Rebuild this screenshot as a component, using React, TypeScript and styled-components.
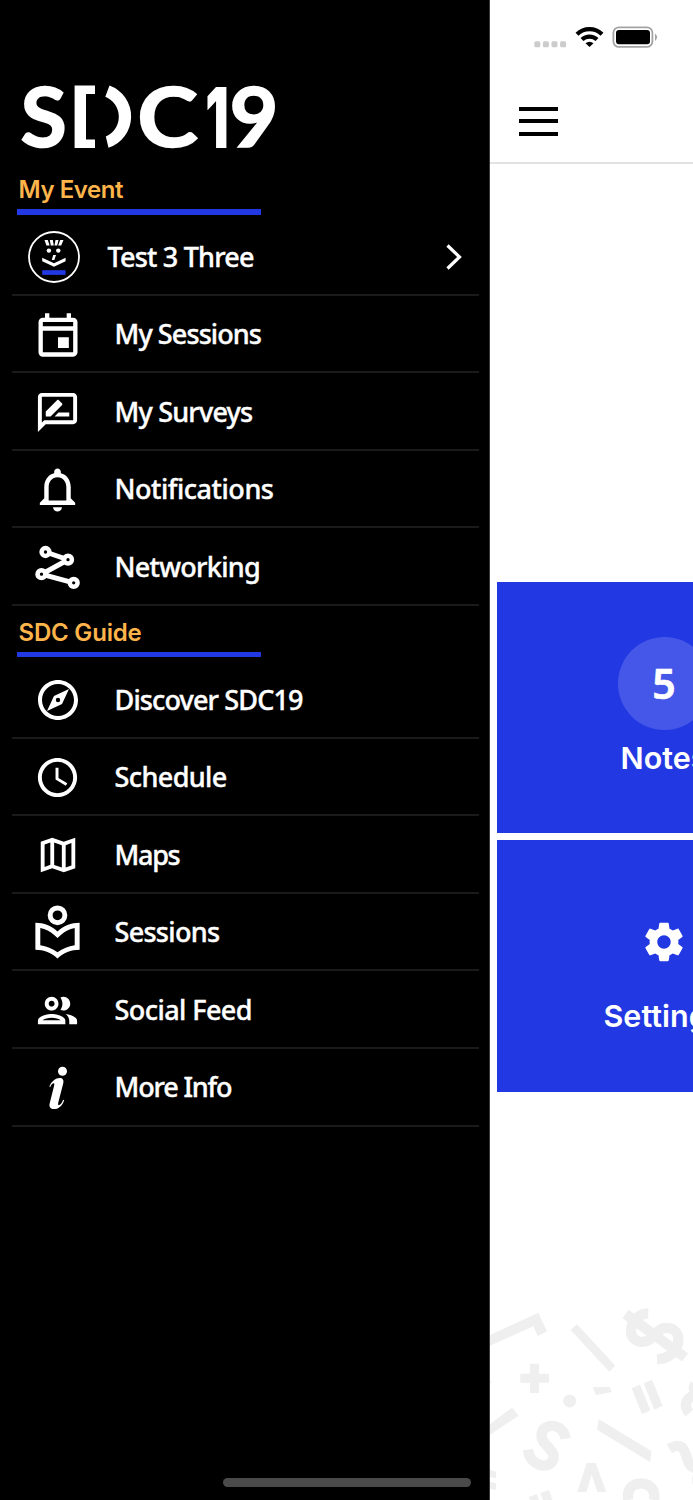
import React from "react";
import styled, { createGlobalStyle } from "styled-components";

const GlobalStyle = createGlobalStyle`
  *, *::before, *::after { box-sizing: border-box; }
  html, body { margin: 0; padding: 0; background: #fff; }
  body { overflow: hidden; }
`;

const BLUE = "#2238e2";
const AMBER = "#fdb44b";
const BODY_FONT = `"Noto Sans", "Open Sans", sans-serif`;
const SHARP_FONT = `Inter, Lato, sans-serif`;

const Screen = styled.div`
  display: flex;
  width: 693px;
  height: 1500px;
  overflow: hidden;
  background: #fff;
`;

const Drawer = styled.nav`
  display: flex;
  flex-direction: column;
  flex: 0 0 490px;
  height: 1500px;
  background: #000;
  border-right: 1px solid #3a3a3a;
`;

const LogoSvg = styled.svg`
  display: block;
  flex: none;
  width: 290px;
  height: 124px;
  margin: 50px 0 0 5px;
`;

const SectionTitle = styled.h2<{ $top: number; $tracking: number }>`
  margin: ${(p) => p.$top}px 0 0 18.5px;
  height: 32px;
  font: 600 24px/32px ${SHARP_FONT};
  letter-spacing: ${(p) => p.$tracking}px;
  color: ${AMBER};
  white-space: nowrap;
`;

const SectionRule = styled.div`
  width: 244px;
  height: 5.5px;
  margin: 3px 0 3.5px 17px;
  flex: none;
  background: ${BLUE};
`;

const MenuList = styled.ul`
  list-style: none;
  margin: 0 10px 0 12px;
  padding: 0;
`;

const MenuRow = styled.li`
  display: flex;
  align-items: center;
  height: 77.6px;
  padding-top: 2.5px;
  border-bottom: 2px solid #1a1a1a;
`;

const IconSlot = styled.span<{ $lead?: boolean }>`
  display: flex;
  align-items: center;
  justify-content: center;
  flex: none;
  width: ${(p) => (p.$lead ? 84 : 91)}px;
  margin-right: 11.5px;
`;

const MenuLabel = styled.span<{ $tracking: number }>`
  flex: 1;
  padding-bottom: 1px;
  font: 500 27px/38px ${BODY_FONT};
  letter-spacing: ${(p) => p.$tracking}px;
  -webkit-text-stroke: 0.4px #fff;
  color: #fff;
  white-space: nowrap;
`;

const ChevronSvg = styled.svg`
  width: 20px;
  height: 28px;
  margin-right: 15px;
`;

const HomeIndicator = styled.div`
  width: 248px;
  height: 8.5px;
  margin: auto 0 13.5px 222.5px;
  border-radius: 5px;
  background: #4a4a4a;
`;

const Page = styled.main`
  display: flex;
  flex-direction: column;
  flex: 1;
  min-width: 0;
  height: 1500px;
  overflow: hidden;
`;

const StatusBar = styled.div`
  display: flex;
  align-items: flex-start;
  height: 76px;
  padding: 25px 0 0 44px;
`;

const StatusSvg = styled.svg`
  display: block;
  width: 126px;
  height: 24px;
`;

const TopBar = styled.header`
  height: 88px;
  padding: 30.6px 0 0 29px;
  border-bottom: 2px solid #e2e2e2;
`;

const MenuButton = styled.button`
  display: flex;
  flex-direction: column;
  gap: 8.8px;
  width: 39px;
  padding: 0;
  border: 0;
  background: none;
`;

const MenuBar = styled.span`
  display: block;
  height: 4px;
  background: #000;
`;

const Tiles = styled.section`
  display: flex;
  flex-direction: column;
  gap: 7px;
  margin: 418px 0 0 7px;
  width: 334px;
`;

const Tile = styled.article<{ $pad: number }>`
  display: flex;
  flex-direction: column;
  align-items: center;
  height: 251.4px;
  padding-top: ${(p) => p.$pad}px;
  background: ${BLUE};
  color: #fff;
`;

const CountBadge = styled.div`
  display: flex;
  align-items: center;
  justify-content: center;
  width: 93px;
  height: 93px;
  padding-bottom: 2px;
  border-radius: 50%;
  background: #4557e8;
  font: 600 41px/40px ${BODY_FONT};
  -webkit-text-stroke: 0.6px #fff;
`;

const TileLabel = styled.div<{ $top: number }>`
  margin-top: ${(p) => p.$top}px;
  font: 600 30.5px/40px ${SHARP_FONT};
`;

const PatternSvg = styled.svg`
  display: block;
  width: 203px;
  height: 205px;
  margin-top: auto;
`;

const Glyph = ({ size, d }: { size: number; d: string }) => (
  <svg width={size} height={size} viewBox="0 0 24 24" fill="#fff" fillRule="evenodd">
    <path d={d} />
  </svg>
);

const ICONS = {
  event:
    "M19 4h-1V2h-2v2H8V2H6v2H5c-1.11 0-1.99.9-1.99 2L3 20a2 2 0 002 2h14c1.1 0 2-.9 2-2V6c0-1.1-.9-2-2-2zm0 16H5V10h14v10zm0-12H5V6h14v2zm-7 5h5v5h-5z",
  review:
    "M20 2H4c-1.1 0-1.99.9-1.99 2L2 22l4-4h14c1.1 0 2-.9 2-2V4c0-1.1-.9-2-2-2zm0 14H5.17l-.59.59-.58.58V4h16v12zm-9.5-2H18v-2h-5.5zm3.86-5.87c.2-.2.2-.51 0-.71l-1.77-1.77c-.2-.2-.51-.2-.71 0L6 11.53V14h2.47l5.89-5.87z",
  bell:
    "M12 22c1.1 0 2-.9 2-2h-4c0 1.1.9 2 2 2zm6-6v-5c0-3.07-1.63-5.64-4.5-6.32V4c0-.83-.67-1.5-1.5-1.5s-1.5.67-1.5 1.5v.68C7.64 5.36 6 7.92 6 11v5l-2 2v1h16v-1l-2-2zm-2 1H8v-6c0-2.48 1.51-4.5 4-4.5s4 2.02 4 4.5v6z",
  compass:
    "M12 2C6.48 2 2 6.48 2 12s4.48 10 10 10 10-4.48 10-10S17.52 2 12 2zm0 18c-4.41 0-8-3.59-8-8s3.59-8 8-8 8 3.59 8 8-3.59 8-8 8zM17.5 6.5L9.99 9.99 6.5 17.5l7.51-3.49L17.5 6.5zM12 10.9a1.1 1.1 0 110 2.2 1.1 1.1 0 010-2.2z",
  clock:
    "M12 2C6.48 2 2 6.48 2 12s4.48 10 10 10 10-4.48 10-10S17.52 2 12 2zm0 18c-4.41 0-8-3.59-8-8s3.59-8 8-8 8 3.59 8 8-3.59 8-8 8zM12.5 7H11v6l5.25 3.15.75-1.23-4.5-2.67z",
  map: "M3 5.1L9 3l6 2.1L21 3v15.9L15 21l-6-2.1L3 21zM5 6.5v11.7l3-1.05V5.47zM10 5.47v11.7l4 1.4V6.87zM16 6.86v11.7l3-1.05V5.8z",
  library:
    "M12 1a4 4 0 110 8 4 4 0 010-8zM12 3a2 2 0 100 4 2 2 0 000-4zM12 11.55C9.64 9.35 6.48 8 3 8v11c3.48 0 6.64 1.35 9 3.55 2.36-2.19 5.52-3.55 9-3.55V8c-3.48 0-6.64 1.35-9 3.55zm7 5.63c-2.53.34-4.93 1.3-7 2.82-2.06-1.52-4.47-2.49-7-2.83v-6.95c2.1.38 4.05 1.35 5.64 2.83L12 14.28l1.36-1.27A11.18 11.18 0 0119 10.18z",
  people:
    "M9 13.75c-2.34 0-7 1.17-7 3.5V19h14v-1.75c0-2.33-4.66-3.5-7-3.5zM4.34 17c.84-.58 2.87-1.25 4.66-1.25s3.82.67 4.66 1.25H4.34zM9 12c1.93 0 3.5-1.57 3.5-3.5S10.93 5 9 5 5.500 6.57 5.500 8.500 7.070 12 9 12zm0-5c.83 0 1.500.67 1.500 1.500S9.830 10 9 10s-1.500-.67-1.500-1.500S8.170 7 9 7zm7.040 6.810c1.160.84 1.960 1.960 1.960 3.440V19h4v-1.750c0-2.020-3.500-3.170-5.960-3.440zM15 12c1.930 0 3.500-1.570 3.500-3.500S16.930 5 15 5c-.54 0-1.040.13-1.500.35.63.89 1 1.980 1 3.150s-.37 2.260-1 3.150c.46.22.96.35 1.500.35z",
  gear:
    "M19.43 12.98c.04-.32.07-.64.07-.98s-.03-.66-.07-.98l2.11-1.65c.19-.15.24-.42.12-.64l-2-3.46c-.12-.22-.39-.3-.61-.22l-2.49 1c-.52-.4-1.08-.73-1.69-.98l-.38-2.65C14.46 2.18 14.25 2 14 2h-4c-.25 0-.46.18-.49.42l-.38 2.65c-.61.25-1.17.59-1.69.98l-2.49-1c-.23-.09-.49 0-.61.22l-2 3.46c-.13.22-.07.49.12.64l2.11 1.65c-.04.32-.07.65-.07.98s.03.66.07.98l-2.11 1.65c-.19.15-.24.42-.12.64l2 3.46c.12.22.39.3.61.22l2.49-1c.52.4 1.08.73 1.69.98l.38 2.65c.03.24.24.42.49.42h4c.25 0 .46-.18.49-.42l.38-2.65c.61-.25 1.17-.59 1.69-.98l2.49 1c.23.09.49 0 .61-.22l2-3.46c.12-.22.07-.49-.12-.64l-2.11-1.65zM12 15.5c-1.93 0-3.5-1.57-3.5-3.5s1.57-3.5 3.5-3.5 3.5 1.57 3.5 3.5-1.57 3.5-3.5 3.5z",
};

const Avatar = () => (
  <svg width="52" height="52" viewBox="0 0 52 52" fill="#fff">
    <circle cx="26" cy="26" r="25" fill="none" stroke="#fff" strokeWidth="1.8" />
    <path d="M16.500 9h3.300l1.800 5.600h-3.200zM21.800 9h3l1 5.600h-3zM27.500 9h3l-1.300 5.600h-2.700zM32.200 9h3.300l-2.300 5.600h-3z" />
    <circle cx="20.900" cy="19.600" r="2.200" />
    <circle cx="30.300" cy="19.600" r="2.200" />
    <path d="M25.200 24h2.800l-1.700 5h-2.500z" />
    <path d="M14.200 26.800L26 32.300 37.600 26.800v3.500L26 35.800l-11.800-5.500z" />
    <rect x="14.200" y="39.200" width="23.400" height="4.700" fill={BLUE} />
  </svg>
);

const NetworkIcon = () => (
  <svg width="46" height="46" viewBox="35 544.5 46 46" fill="none" stroke="#fff">
    <path d="M45.5 552.5L68 560.2 41.5 574.7 73.7 583.3" strokeWidth="5" />
    {[
      [45.5, 552.5],
      [68, 560.2],
      [41.5, 574.7],
      [73.7, 583.3],
    ].map(([x, y]) => (
      <circle key={x} cx={x} cy={y} r="3.9" fill="#000" strokeWidth="4.5" />
    ))}
  </svg>
);

const InfoIcon = () => (
  <svg width="20" height="44" viewBox="47.7 1066 20 44" fill="#fff">
    <circle cx="62.2" cy="1071.2" r="4.5" />
    <path d="M49 1086.5C51.5 1081 55.500 1078 59.200 1078C62.500 1078 63.800 1080 62.900 1083.500L58 1102.500C57.400 1105 58.200 1105.600 59.400 1104.800C61 1103.700 62 1101.800 62.900 1099.700L63.900 1100.200C62.300 1105.300 58.700 1109 54 1109C50 1109 48.500 1106.800 49.400 1103.200L53.800 1085.800C54.400 1083.300 53.700 1082.700 52.500 1083.500C51.500 1084.200 50.700 1085.300 49.900 1087Z" />
  </svg>
);

const Logo = () => (
  <LogoSvg viewBox="5 50 290 124" fill="#fff" role="img" aria-label="SDC19">
    <g fontFamily="Lato, sans-serif" fontWeight="700" fontSize="82" stroke="#fff" strokeWidth="1.6">
      <text transform="translate(20.600 147.400) scale(1.030 1)">S</text>
      <text transform="translate(137.300 147.400) scale(1.120 1)">C</text>
      <text transform="translate(229.500 147.400) scale(1.030 1)">9</text>
    </g>
    <text transform="translate(205.300 147.900) scale(.620 1)" fontFamily="Inter, sans-serif" fontWeight="900" fontSize="84">
      1
    </text>
    <path d="M74.600 85.500H95V94H86V139.500H95V148H74.600Z" />
    <path d="M109.500 85.500A33 33 0 01108.500 147.800L105.800 136.500A21.500 21.500 0 00105.300 96.800Z" />
  </LogoSvg>
);

const eventItems = [
  { label: "My Sessions", tracking: -0.9, icon: <Glyph size={52} d={ICONS.event} /> },
  { label: "My Surveys", tracking: -0.8, icon: <Glyph size={47} d={ICONS.review} /> },
  { label: "Notifications", tracking: -0.45, icon: <Glyph size={53} d={ICONS.bell} /> },
  { label: "Networking", tracking: -0.7, icon: <NetworkIcon /> },
];

const guideItems = [
  { label: "Discover SDC19", tracking: -0.86, icon: <Glyph size={48} d={ICONS.compass} /> },
  { label: "Schedule", tracking: -0.6, icon: <Glyph size={47} d={ICONS.clock} /> },
  { label: "Maps", tracking: -1.3, icon: <Glyph size={46} d={ICONS.map} /> },
  { label: "Sessions", tracking: -0.7, icon: <Glyph size={59} d={ICONS.library} /> },
  { label: "Social Feed", tracking: -0.56, icon: <Glyph size={47} d={ICONS.people} /> },
  { label: "More Info", tracking: -1.15, icon: <InfoIcon /> },
];

const Pattern = () => (
  <PatternSvg viewBox="15 0 609 615" fill="#efefef">
    <path d="M15 120L160 53 186 109 158 123 145 94 15 152Z" />
    <path d="M276 88L391 212 373 230 257 105Z" />
    <path d="M135 206h27v30h30v27h-30v31h-27v-31h-29v-27h29z" />
    <circle cx="254" cy="318" r="19.500" />
    <path d="M323 276h51l6 15-47 9zM341 372L499 468 496 502 336 404zM82 338L101 362 15 419V387z" />
    <path d="M440 280l25-11 31 77-25 12zM476 265l25-11 32 78-25 12z" />
    <path d="M305 504h27l32 87h-27l-17-52-16 52h-27zM131 606l24-8 7 17h-27zM166 594l26-9 10 30h-28z" />
    <path d="M15 525l18 5v20l-18-4zM15 560l18 5v20l-18-4zM15 256l4 5-4 6z" />
    <g fill="none" stroke="#efefef" strokeWidth="31">
      <path d="M242 431C237 401 213 388 191 394C166 401 163 426 180 446C204 472 214 482 200 502C181 522 135 511 129 464" />
      <path d="M490 55C461 55 438 80 438 108C438 142 481 153 506 122C536 82 580 99 580 133C580 168 551 192 516 193" />
      <path d="M422 57L600 187" />
      <path d="M430 615C424 584 442 565 468 565C494 565 513 585 507 615" />
      <path d="M553 461C590 440 597 462 605 486C611 509 617 514 630 520" />
      <path d="M630 268C617 287 642 290 624 302C600 314 596 335 613 354" />
      <path d="M640 540Q634 555 640 570" />
    </g>
  </PatternSvg>
);

export default function App() {
  return (
    <Screen>
      <GlobalStyle />
      <Drawer>
        <Logo />
        <SectionTitle $top={0} $tracking={-0.45}>My Event</SectionTitle>
        <SectionRule />
        <MenuList>
          <MenuRow>
            <IconSlot $lead>
              <Avatar />
            </IconSlot>
            <MenuLabel $tracking={-0.79}>Test 3 Three</MenuLabel>
            <ChevronSvg viewBox="444 243 20 28" fill="none" stroke="#fff" strokeWidth="3.2">
              <path d="M447.500 245.500L459.500 257 447.500 268.500" />
            </ChevronSvg>
          </MenuRow>
          {eventItems.map((item) => (
            <MenuRow key={item.label}>
              <IconSlot>{item.icon}</IconSlot>
              <MenuLabel $tracking={item.tracking}>{item.label}</MenuLabel>
            </MenuRow>
          ))}
        </MenuList>
        <SectionTitle $top={11} $tracking={-0.2}>SDC Guide</SectionTitle>
        <SectionRule />
        <MenuList>
          {guideItems.map((item) => (
            <MenuRow key={item.label}>
              <IconSlot>{item.icon}</IconSlot>
              <MenuLabel $tracking={item.tracking}>{item.label}</MenuLabel>
            </MenuRow>
          ))}
        </MenuList>
        <HomeIndicator />
      </Drawer>
      <Page>
        <StatusBar>
          <StatusSvg viewBox="534 25 126 24">
            {[534.3, 542.9, 551.5, 560.1].map((x) => (
              <rect key={x} x={x} y="41.200" width="6" height="6" rx="1.500" fill="#ccc" />
            ))}
            <g fill="none" stroke="#000" strokeWidth="4.200">
              <path d="M577 34.200A18 18 0 01602 34.200" />
              <path d="M582 39.500A11 11 0 01597 39.500" />
            </g>
            <path d="M585.500 43.200A6 6 0 01593.500 43.200L589.500 47Z" />
            <rect x="613.400" y="27.300" width="39" height="19.600" rx="5.500" fill="none" stroke="#a3a3a3" strokeWidth="1.800" />
            <rect x="616" y="30" width="34" height="14.200" rx="3" />
            <path d="M655 33.500A4.500 4.500 0 01655 41Z" fill="#a3a3a3" />
          </StatusSvg>
        </StatusBar>
        <TopBar>
          <MenuButton aria-label="Menu">
            <MenuBar />
            <MenuBar />
            <MenuBar />
          </MenuButton>
        </TopBar>
        <Tiles>
          <Tile $pad={55}>
            <CountBadge>5</CountBadge>
            <TileLabel $top={8}>Notes</TileLabel>
          </Tile>
          <Tile $pad={79}>
            <Glyph size={46} d={ICONS.gear} />
            <TileLabel $top={31}>Settings</TileLabel>
          </Tile>
        </Tiles>
        <Pattern />
      </Page>
    </Screen>
  );
}
